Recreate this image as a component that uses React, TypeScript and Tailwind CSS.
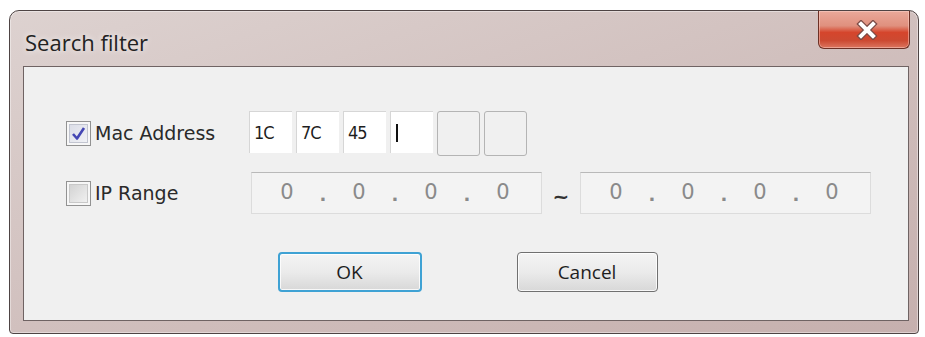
function CheckBox({ checked }: { checked?: boolean }) {
  return (
    <div className="w-[25px] h-[25px] border border-[#929292] bg-[#f7f7f7] p-[2px] shrink-0">
      <div
        className={
          checked
            ? 'w-full h-full border border-[#c2c5d0] bg-gradient-to-br from-[#dcdee8] to-[#f0f1f5] flex items-center justify-center'
            : 'w-full h-full border border-[#c8c8c8] bg-gradient-to-br from-[#d3d3d3] to-[#f0f0f0]'
        }
      >
        {checked && (
          <svg width="15" height="15" viewBox="0 0 15 15">
            <path d="M2 8 L6 12.5 L13 2" fill="none" stroke="#4446b4" strokeWidth="2.6" strokeLinejoin="round" />
          </svg>
        )}
      </div>
    </div>
  );
}

function MacBox({ value, cursor, disabled }: { value?: string; cursor?: boolean; disabled?: boolean }) {
  if (disabled) {
    return <div className="w-[43px] h-[45px] rounded-[3px] border border-[#b4b4b4] bg-[#f0f0f0]" />;
  }
  return (
    <div className="w-[43px] h-[42px] bg-white border-t border-l border-[#d6d6d6] flex items-center pl-[4px] text-[18px] text-[#1e1e1e] tracking-[-1px] font-['DejaVu_Sans_Condensed','DejaVu_Sans',sans-serif]">
      {value}
      {cursor && <span className="w-[2px] h-[18px] bg-[#111] ml-[1px]" />}
    </div>
  );
}

function IpField() {
  return (
    <div className="h-[42px] w-[291px] border border-[#dcdcdc] border-t-[#b9b9b9] bg-[#f3f3f3] flex items-center pl-[28px] text-[21px] text-[#8a8a8a]">
      {[0, 1, 2, 3].map((i) => (
        <div key={i} className="flex items-center">
          <span className="w-[14px] text-center">0</span>
          {i < 3 && <span className="w-[58px] text-center text-[18px] font-bold pt-[3px]">.</span>}
        </div>
      ))}
    </div>
  );
}

function CloseButton() {
  return (
    <div className="w-[92px] h-[38px] rounded-b-[6px] border border-t-0 border-[#6d3025] bg-[linear-gradient(to_bottom,#e9a99a_0%,#e0907e_40%,#d5452c_58%,#cc4a32_80%,#dc7660_100%)] flex items-center justify-center shadow-[inset_0_0_0_1px_rgba(255,220,210,0.45)]">
      <svg width="22" height="20" viewBox="0 0 22 20" className="ml-[6px]">
        <path d="M5 4 L17 16 M17 4 L5 16" stroke="#7a4a44" strokeWidth="6.5" strokeLinecap="square" />
        <path d="M5 4 L17 16 M17 4 L5 16" stroke="#ffffff" strokeWidth="4" strokeLinecap="square" />
      </svg>
    </div>
  );
}

export default function App() {
  return (
    <div className="w-[925px] h-[337px] bg-white pl-[9px] pt-[10px] pr-[6px] pb-[3px] flex font-['DejaVu_Sans',sans-serif]">
      <div className="flex-1 flex flex-col rounded-t-[10px] rounded-b-[4px] border border-[#4e4444] bg-gradient-to-br from-[#ddd2d0] via-[#d1c0be] to-[#c6b0ae] shadow-[inset_0_0_0_1px_rgba(255,255,255,0.4)]">
        {/* Title bar */}
        <div className="h-[55px] flex items-start justify-between pl-[15px] pr-[8px]">
          <span className="mt-[15px] text-[22px] text-[#222] font-['Open_Sans',sans-serif] [text-shadow:0_0_6px_rgba(255,255,255,0.9)]">
            Search filter
          </span>
          <CloseButton />
        </div>

        {/* Client area */}
        <div className="flex-1 ml-[13px] mr-[9px] mb-[12px] border border-[#6f6363] bg-[#f0f0f0] flex flex-col pt-[45px]">
          <div className="flex items-center h-[43px]">
            <div className="w-[225px] pl-[42px] flex items-center gap-[4px]">
              <CheckBox checked />
              <span className="text-[19px] text-[#2a2a2a]">Mac Address</span>
            </div>
            <div className="flex items-start gap-[4px]">
              <MacBox value="1C" />
              <MacBox value="7C" />
              <MacBox value="45" />
              <MacBox cursor />
              <MacBox disabled />
              <MacBox disabled />
            </div>
          </div>

          <div className="flex items-center h-[42px] mt-[17px]">
            <div className="w-[225px] pl-[42px] flex items-center gap-[4px]">
              <CheckBox />
              <span className="text-[19px] text-[#2a2a2a]">IP Range</span>
            </div>
            <div className="flex items-center ml-[2px]">
              <IpField />
              <span className="w-[38px] text-center text-[20px] font-bold text-[#333] pt-[6px]">~</span>
              <IpField />
            </div>
          </div>

          <div className="flex justify-center gap-[95px] mt-[38px] pl-[3px]">
            <button className="w-[144px] h-[40px] rounded-[4px] border-2 border-[#3fa2d4] bg-gradient-to-b from-[#f4f4f4] via-[#ebebeb] to-[#d8d8d8] shadow-[inset_0_0_0_1px_rgba(255,255,255,0.8)] text-[19px] text-[#1e1e1e] font-['Open_Sans',sans-serif]">
              OK
            </button>
            <button className="w-[141px] h-[40px] rounded-[4px] border border-[#707070] bg-gradient-to-b from-[#f4f4f4] via-[#ebebeb] to-[#d8d8d8] shadow-[inset_0_0_0_1px_rgba(255,255,255,0.8)] text-[19px] text-[#1e1e1e] font-['Open_Sans',sans-serif]">
              Cancel
            </button>
          </div>
        </div>
      </div>
    </div>
  );
}
